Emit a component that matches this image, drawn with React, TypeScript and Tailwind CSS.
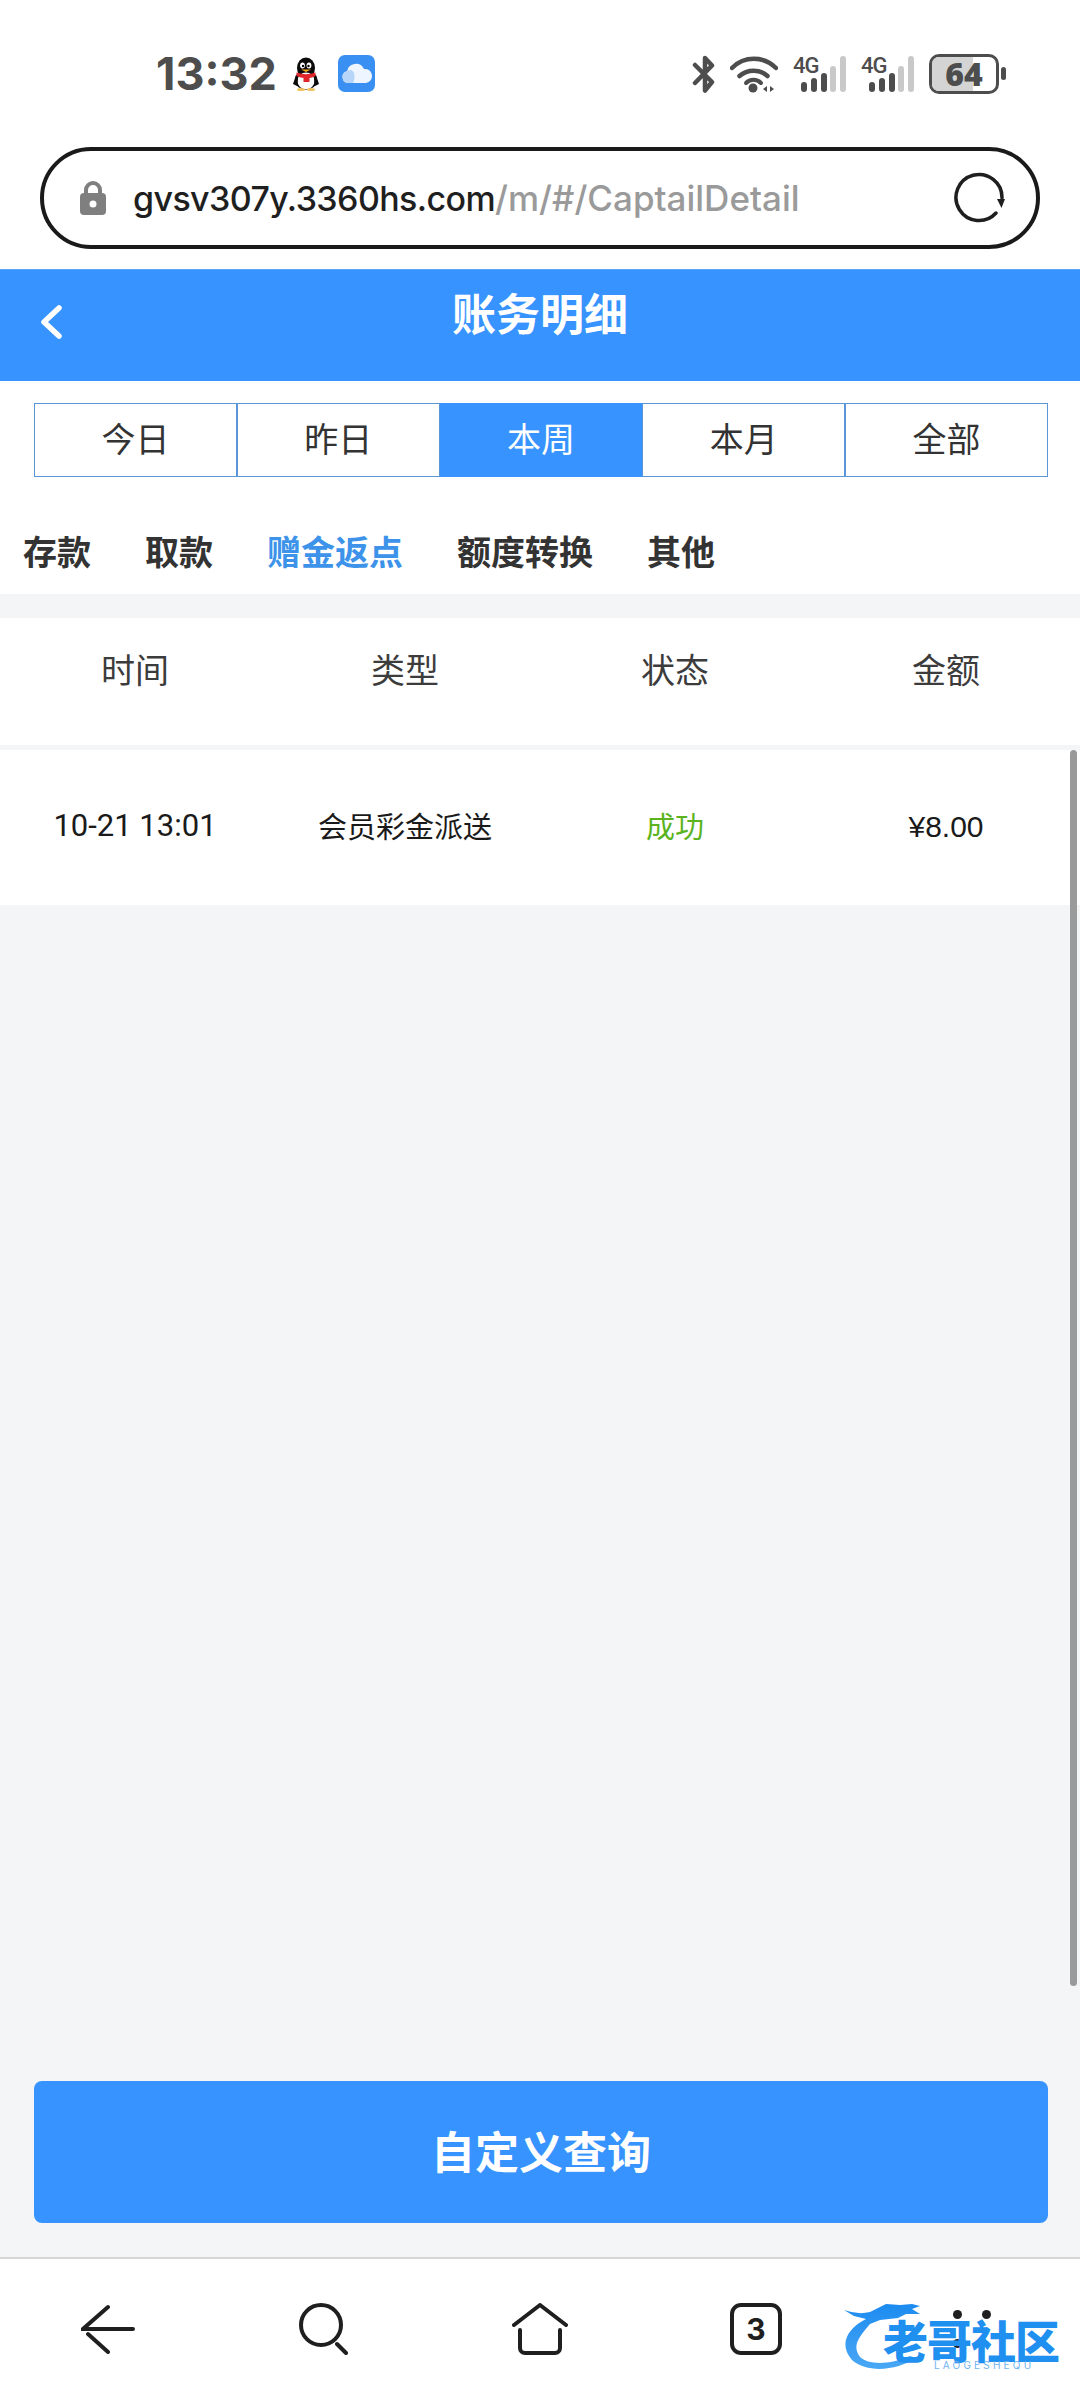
import React from "react";

const CJK = { fontFamily: '"Noto Sans CJK SC", "Noto Sans", sans-serif' };

function Penguin() {
  return (
    <svg width="28" height="34" viewBox="0 0 28 34">
      <ellipse cx="14" cy="11" rx="9" ry="10.5" fill="#0b0b0b" />
      <ellipse cx="14" cy="23" rx="11" ry="10" fill="#0b0b0b" />
      <ellipse cx="14" cy="24" rx="8.5" ry="8.5" fill="#fff" />
      <ellipse cx="10.5" cy="8.5" rx="2.4" ry="3" fill="#fff" />
      <ellipse cx="17" cy="8.5" rx="2.4" ry="3" fill="#fff" />
      <circle cx="11" cy="9" r="1.2" fill="#000" />
      <circle cx="16.5" cy="9" r="1.2" fill="#000" />
      <path d="M9 12.5h10l-5 2.5z" fill="#f4a816" />
      <path d="M4.5 15.5q9.5 3.5 19 0v3.5q-4 2-6 2v4l-6 0v-4q-4-0.5-7-2z" fill="#e0262b" />
      <path d="M1 27L4 18l2 3-1 8zM27 27l-3-9-2 3 1 8z" fill="#0b0b0b" />
      <ellipse cx="9" cy="32.5" rx="4" ry="1.5" fill="#f2c25c" />
      <ellipse cx="19" cy="32.5" rx="4" ry="1.5" fill="#f2c25c" />
    </svg>
  );
}

function CloudApp() {
  return (
    <svg width="37" height="37" viewBox="0 0 37 37">
      <rect width="37" height="37" rx="7" fill="#3a8ff2" />
      <path d="M10 28a6 6 0 0 1-1-11.8A9 9 0 0 1 26 14a7 7 0 0 1 2 14z" fill="#eef5ff" />
      <path d="M10 28a6 6 0 0 1-1-11.8c2-1.500 4-1.500 6 0 2 3 2 8 0 11.800z" fill="#b7d5f8" />
    </svg>
  );
}

function Bluetooth() {
  return (
    <svg width="25" height="38" viewBox="0 0 25 38" fill="none" stroke="#4d4d4d" strokeWidth="4.500" strokeLinecap="round" strokeLinejoin="round">
      <path d="M3 10l17 17-7 8.500V3l7 7.500L3 28" />
    </svg>
  );
}

function Wifi() {
  return (
    <svg width="48" height="38" viewBox="0 0 48 38" fill="none">
      <path d="M2 13a31 31 0 0 1 44 0" stroke="#4d4d4d" strokeWidth="4.500" strokeLinecap="round" />
      <path d="M9.500 21a21 21 0 0 1 28 0" stroke="#4d4d4d" strokeWidth="4.500" strokeLinecap="round" />
      <path d="M16 28a10.500 10.500 0 0 1 15 0" stroke="#4d4d4d" strokeWidth="4" strokeLinecap="round" />
      <circle cx="23" cy="33" r="4.500" fill="#4d4d4d" />
      <path d="M37 31v6l-4-3zM40 31v6l4-3z" fill="#4d4d4d" />
    </svg>
  );
}

function Signal() {
  return (
    <div className="relative w-[53px] h-[38px]">
      <span className="absolute left-0 top-[-2px] text-[22px] leading-[26px] font-medium text-[#4d4d4d] tracking-[-1px]" style={{ fontFamily: '"Roboto", sans-serif' }}>4G</span>
      <svg className="absolute left-0 top-0" width="53" height="38" viewBox="0 0 53 38">
        <rect x="8" y="27" width="6" height="10" rx="3" fill="#4d4d4d" />
        <rect x="18" y="23" width="6" height="14" rx="3" fill="#4d4d4d" />
        <rect x="28" y="18" width="6" height="19" rx="3" fill="#4d4d4d" />
        <rect x="37" y="11" width="6" height="26" rx="3" fill="#c9c9c9" />
        <rect x="47" y="1" width="6" height="36" rx="3" fill="#c9c9c9" />
      </svg>
    </div>
  );
}

function Battery() {
  return (
    <div className="flex items-center gap-[2px]">
      <div className="relative w-[70px] h-[40px] rounded-[10px] border-[3px] border-[#4d4d4d] flex items-center justify-center">
        <div className="absolute left-0 top-0 bottom-0 w-[64%] rounded-l-[7px] bg-[#d4d4d4]" />
        <span className="relative text-[32px] leading-[32px] font-extrabold text-[#4d4d4d]" style={{ fontFamily: '"Open Sans", sans-serif' }}>64</span>
      </div>
      <div className="w-[5px] h-[13px] rounded-full bg-[#4d4d4d]" />
    </div>
  );
}

function Logo() {
  return (
    <div className="absolute left-[842px] top-[2302px] w-[225px] h-[70px] pointer-events-none">
      <svg className="absolute left-0 top-0" width="225" height="70" viewBox="0 0 225 70">
        <defs>
          <linearGradient id="dr" x1="0" y1="0" x2="0" y2="1">
            <stop offset="0" stopColor="#1c8bf0" />
            <stop offset="1" stopColor="#4aa8f5" />
          </linearGradient>
        </defs>
        <path d="M2 8q14 5 26 2l16-8 14 1 12-1 8 2-8 3 8 5-14 0-8 4-18 2-10 4C16 36 10 44 18 55c8 8 30 8 50-1l6 2C56 68 26 72 10 58-4 42 6 26 24 17L12 14z" fill="url(#dr)" />
      </svg>
      <div className="absolute left-[41px] top-[15px] text-[45px] leading-[46px] font-black whitespace-nowrap text-[#1f8ff0] tracking-[-1px]" style={CJK}>老哥社区</div>
      <div className="absolute left-[92px] top-[58px] text-[10px] leading-[10px] tracking-[3.2px] text-[#6fb4f2] whitespace-nowrap" style={{ fontFamily: '"Inter", sans-serif' }}>LAOGESHEQU</div>
    </div>
  );
}

const ranges = ["今日", "昨日", "本周", "本月", "全部"];
const tabs = ["存款", "取款", "赠金返点", "额度转换", "其他"];

export default function App() {
  return (
    <div className="relative w-[1080px] h-[2400px] flex flex-col bg-[#f4f5f7] overflow-hidden" style={CJK}>
      {/* status bar */}
      <div className="h-[147px] bg-white flex items-center justify-between pl-[156px] pr-[74px]">
        <div className="flex items-center">
          <span className="text-[45px] leading-none font-bold text-[#4d4d4d]" style={{ fontFamily: '"Inter", sans-serif' }}>13:32</span>
          <span className="ml-[15px] flex"><Penguin /></span>
          <span className="ml-[18px] flex"><CloudApp /></span>
        </div>
        <div className="flex items-center pl-[2px]">
          <Bluetooth />
          <span className="ml-[13px] flex"><Wifi /></span>
          <span className="ml-[15px] flex"><Signal /></span>
          <span className="ml-[15px] flex"><Signal /></span>
          <span className="ml-[15px] flex"><Battery /></span>
        </div>
      </div>

      {/* url bar */}
      <div className="h-[123px] bg-white pl-[40px] pr-[40px] border-b border-b-[#5aa5f5]">
        <div className="h-[102px] rounded-full border-[4px] border-[#1a1a1a] flex items-center pl-[35px] pr-[30px]">
          <svg width="28" height="36" viewBox="0 0 28 36" fill="none">
            <path d="M7 16V10a7 7 0 0 1 14 0v6" stroke="#7f7f7f" strokeWidth="4" />
            <rect x="1" y="13" width="26" height="22" rx="4" fill="#7f7f7f" />
            <circle cx="14" cy="24" r="3.500" fill="#fff" />
          </svg>
          <div className="ml-[26px] flex-1 text-[34px] leading-none font-medium text-[#1f1f1f] tracking-[-0.6px] whitespace-nowrap" style={{ fontFamily: '"Inter", sans-serif' }}>
            gvsv307y.3360hs.com<span className="text-[35px] tracking-normal text-[#9a9a9a]">/m/#/CaptailDetail</span>
          </div>
          <svg width="54" height="54" viewBox="0 0 54 54" fill="none">
            <path d="M44 42A23 23 0 1 1 50 27" stroke="#1f1f1f" strokeWidth="3.500" strokeLinecap="round" />
            <path d="M45 28h8l-3.500 9z" fill="#1f1f1f" />
          </svg>
        </div>
      </div>

      {/* header */}
      <div className="relative h-[111px] bg-[#3793ff] flex justify-center pt-[14px]">
        <svg className="absolute left-[38px] top-[33px]" width="26" height="38" viewBox="0 0 26 38" fill="none">
          <path d="M21 5L6 19l15 14" stroke="#fff" strokeWidth="5.500" strokeLinecap="round" strokeLinejoin="round" />
        </svg>
        <div className="text-[44px] leading-[56px] font-bold text-white">账务明细</div>
      </div>

      {/* date range */}
      <div className="bg-white pt-[22px] pl-[34px] pr-[32px] h-[147px]">
        <div className="grid grid-cols-5 h-[74px]">
          {ranges.map((r) => (
            <div
              key={r}
              className={
                r === "本周"
                  ? "flex items-center justify-center pb-[6px] text-[34px] bg-[#3793ff] text-white border border-[#3793ff]"
                  : "flex items-center justify-center pb-[6px] text-[34px] bg-white text-[#333333] border border-[#5b96d6]"
              }
            >
              {r}
            </div>
          ))}
        </div>
      </div>

      {/* tabs */}
      <div className="h-[66px] bg-white flex items-start pl-[23px] gap-[54px]">
        {tabs.map((t) => (
          <span key={t} className={t === "赠金返点" ? "text-[34px] leading-[46px] font-bold text-[#3d92ea]" : "text-[34px] leading-[46px] font-bold text-[#333333]"}>{t}</span>
        ))}
      </div>

      {/* table */}
      <div className="mt-[24px] h-[127px] bg-white grid grid-cols-4 items-start pt-[27px] text-[34px] leading-[48px] text-[#3c3c3c] text-center">
        <span>时间</span>
        <span>类型</span>
        <span>状态</span>
        <span className="pl-[2px]">金额</span>
      </div>
      <div className="mt-[5px] h-[155px] bg-white grid grid-cols-4 items-center pb-[3px] text-center text-[29px] text-[#1a1a1a]">
        <span className="text-[31px]" style={{ fontFamily: '"Roboto", sans-serif' }}>10-21 13:01</span>
        <span>会员彩金派送</span>
        <span className="text-[#5bb31f]">成功</span>
        <span className="pl-[2px] text-[30px]" style={{ fontFamily: '"Liberation Sans", sans-serif' }}>¥8.00</span>
      </div>

      <div className="flex-1 flex flex-col justify-end pl-[34px] pr-[32px] pb-[34px]">
        <div className="h-[142px] rounded-[8px] bg-[#3793ff] flex items-center justify-center pb-[4px] text-[44px] font-bold text-white">自定义查询</div>
      </div>

      {/* bottom nav */}
      <div className="h-[143px] bg-white border-t-[2px] border-[#d6d6d6] grid grid-cols-5 items-center pb-[1px]">
        <div className="flex justify-center">
          <svg width="54" height="50" viewBox="0 0 54 50" fill="none" stroke="#1f1f1f" strokeWidth="4" strokeLinecap="round">
            <path d="M27 3L2 25h50M7 30l20 18" />
          </svg>
        </div>
        <div className="flex justify-center">
          <svg width="50" height="52" viewBox="0 0 50 52" fill="none" stroke="#1f1f1f" strokeWidth="4" strokeLinecap="round">
            <circle cx="22" cy="22" r="20" />
            <path d="M38 41l9 9" />
          </svg>
        </div>
        <div className="flex justify-center">
          <svg width="56" height="52" viewBox="0 0 56 52" fill="none" stroke="#1f1f1f" strokeWidth="4" strokeLinecap="round" strokeLinejoin="round">
            <path d="M2 22L28 2l26 20" />
            <path d="M8 27v18a5 5 0 0 0 5 5h30a5 5 0 0 0 5-5V27" />
          </svg>
        </div>
        <div className="flex justify-center">
          <div className="w-[52px] h-[52px] rounded-[11px] border-[4px] border-[#1f1f1f] flex items-center justify-center text-[30px] font-bold text-[#1f1f1f]" style={{ fontFamily: '"Inter", sans-serif' }}>3</div>
        </div>
        <div className="flex justify-center">
          <div className="grid grid-cols-2 gap-x-[20px] gap-y-[20px]">
            <span className="w-[9px] h-[9px] rounded-full bg-[#1f1f1f]" />
            <span className="w-[9px] h-[9px] rounded-full bg-[#1f1f1f]" />
            <span className="w-[9px] h-[9px] rounded-full bg-[#1f1f1f]" />
            <span className="w-[9px] h-[9px] rounded-full bg-transparent" />
          </div>
        </div>
      </div>

      {/* scrollbar */}
      <div className="absolute left-[1070px] top-[750px] w-[7px] h-[1236px] rounded-full bg-[#9a9a9a]" />
      <Logo />
    </div>
  );
}
